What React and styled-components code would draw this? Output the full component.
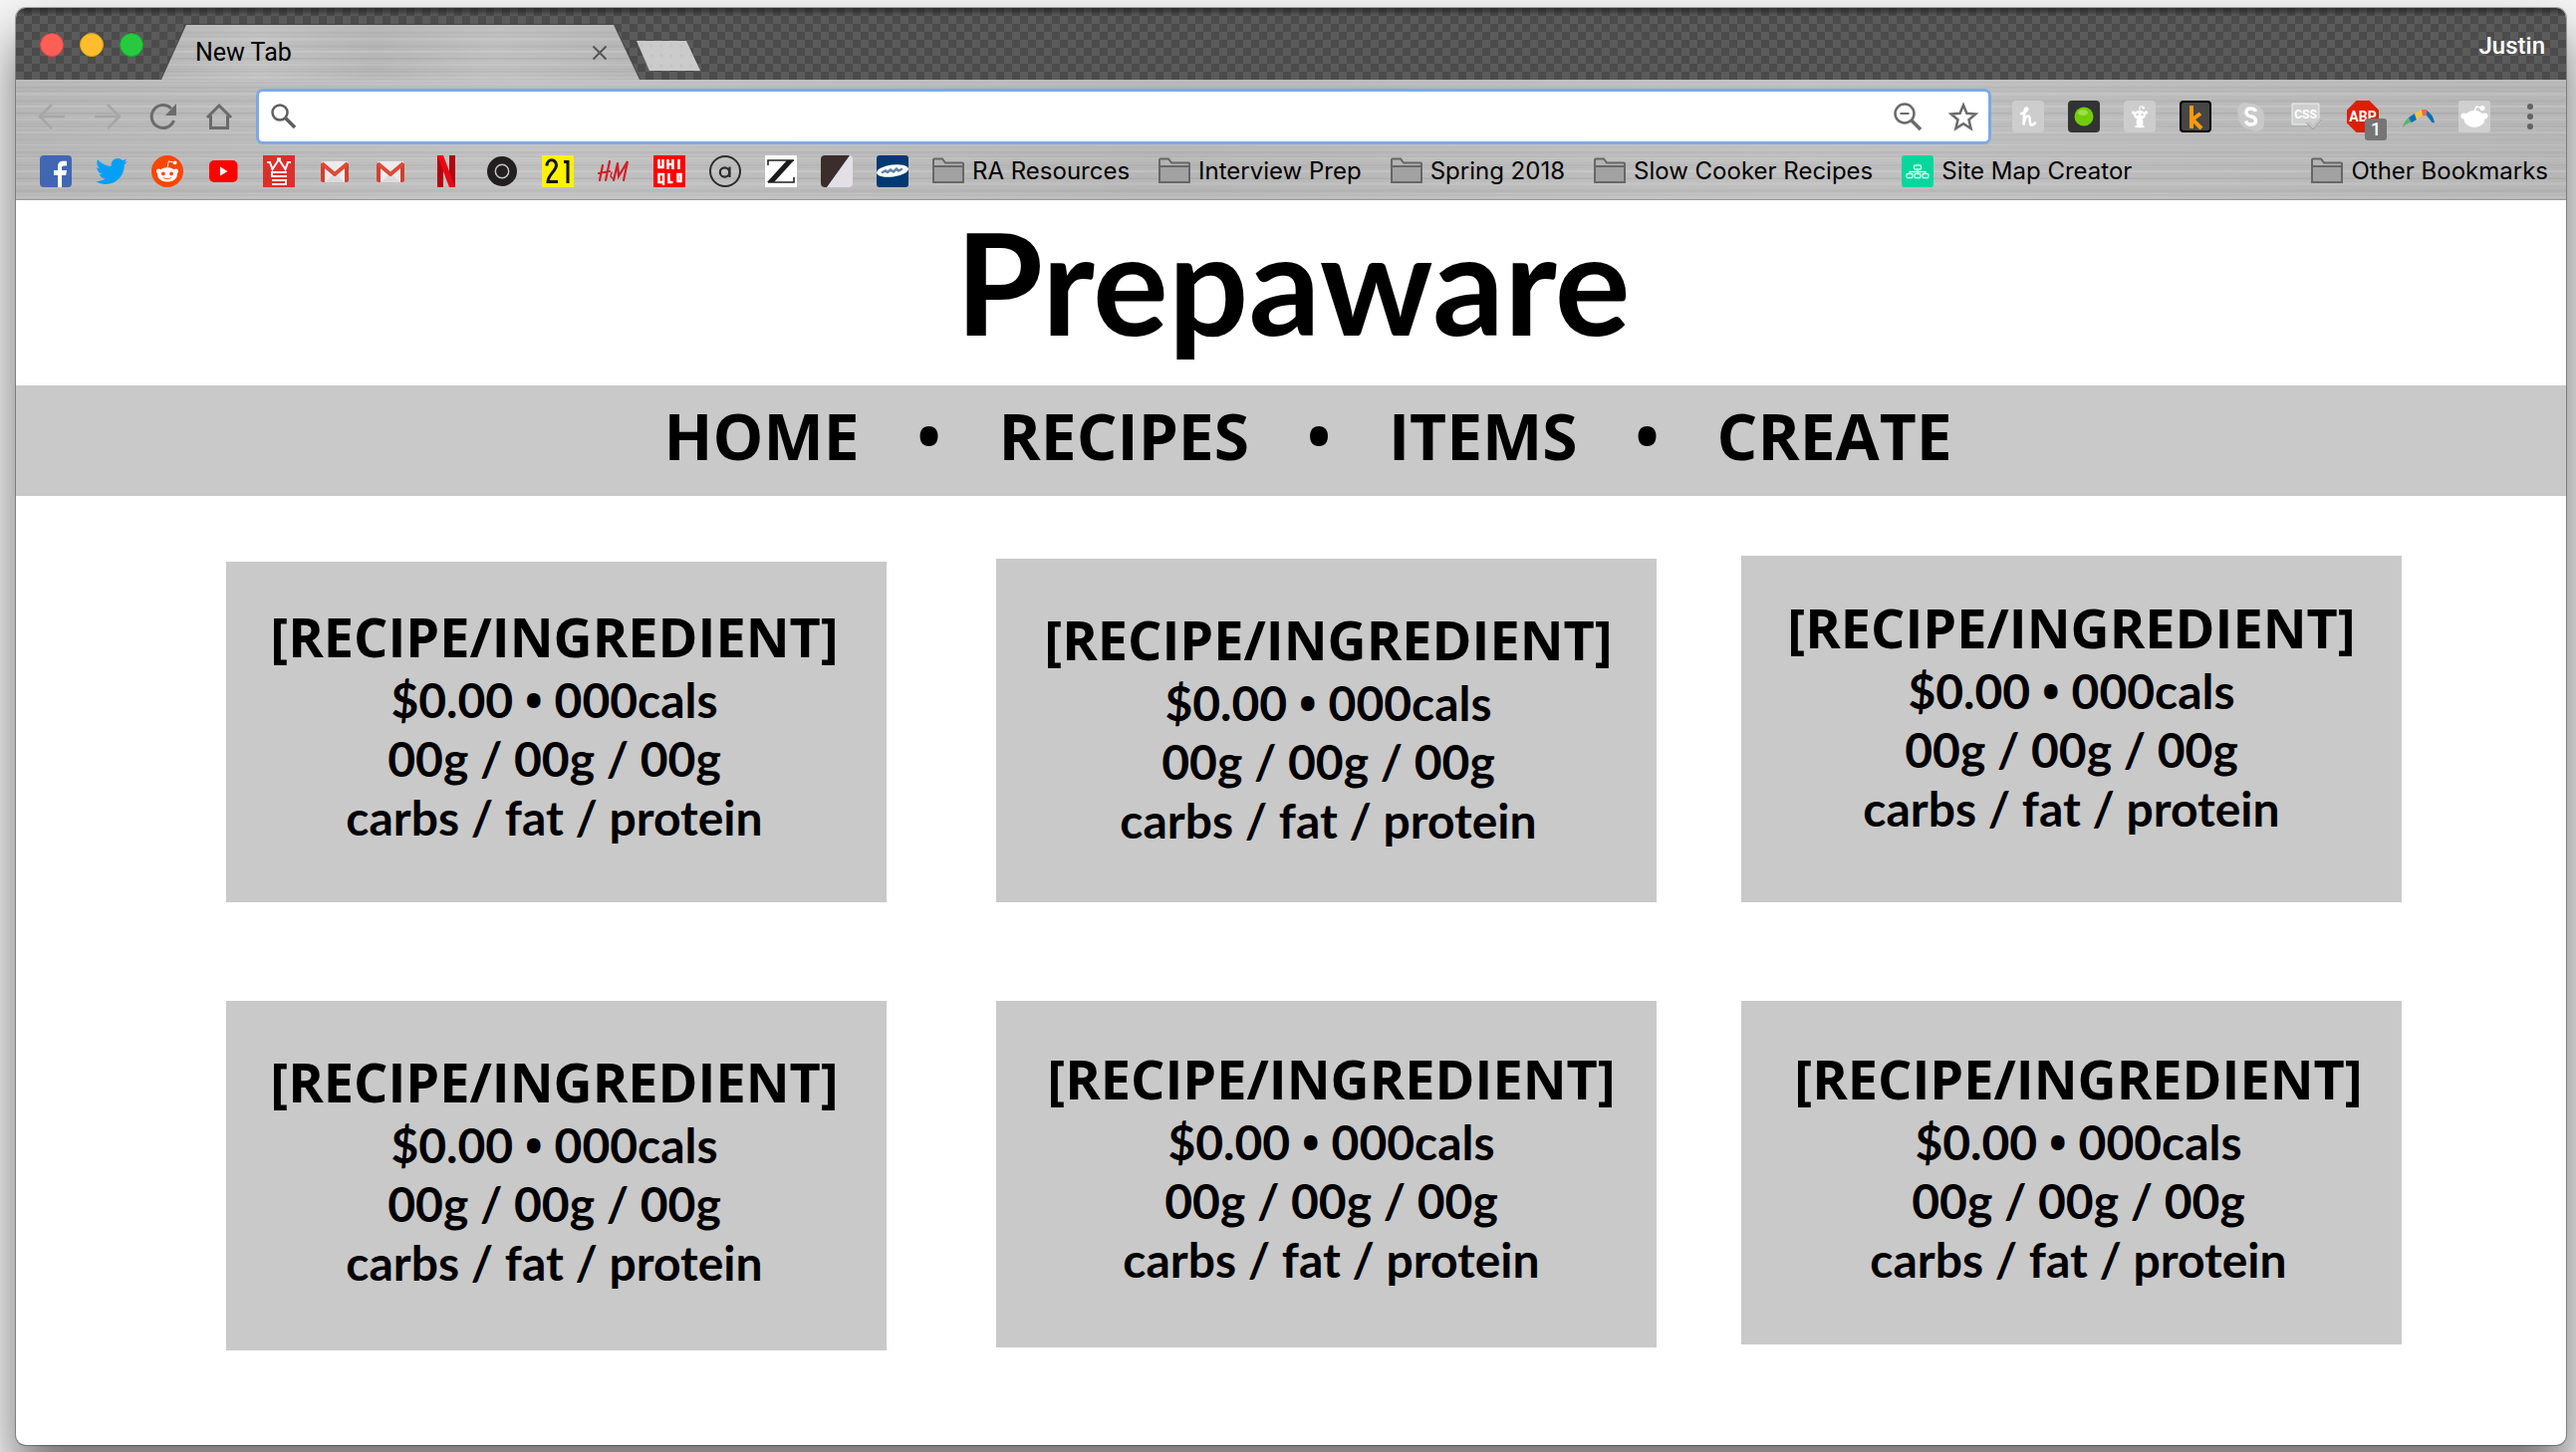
import React from "react";
import styled, { createGlobalStyle, css } from "styled-components";
import { FaTwitter, FaRedditAlien } from "react-icons/fa";

const uiFont = 'Inter, Roboto, "Liberation Sans", sans-serif';
const headingFont = '"Open Sans", "Noto Sans", sans-serif';
const pageFont = 'Lato, "Open Sans", sans-serif';

const metal = css`
  background-color: #bcbcbc;
  background-image:
    repeating-linear-gradient(180deg, rgba(255, 255, 255, 0.1) 0 2px, transparent 2px 7px, rgba(0, 0, 0, 0.03) 7px 9px, transparent 9px 13px),
    repeating-linear-gradient(180deg, rgba(0, 0, 0, 0.03) 0 1px, transparent 1px 4px, rgba(255, 255, 255, 0.08) 4px 5px, transparent 5px 11px),
    linear-gradient(90deg, rgba(0, 0, 0, 0.03), rgba(255, 255, 255, 0.08) 20%, rgba(0, 0, 0, 0.03) 45%, rgba(255, 255, 255, 0.06) 70%, rgba(0, 0, 0, 0.03));
`;

const GlobalStyle = createGlobalStyle`
  *, *::before, *::after { box-sizing: border-box; }
  body { margin: 0; background: #f4f4f4; color: #000; }
  button { border: 0; padding: 0; background: none; font: inherit; color: inherit; cursor: pointer; }
  a { color: inherit; text-decoration: none; }
`;

const Desktop = styled.div`
  min-height: 100vh;
  padding: 8px 10px 7px 16px;
  display: flex;
  overflow: hidden;
`;

const Window = styled.div`
  flex: 1;
  display: flex;
  flex-direction: column;
  overflow: hidden;
  border-radius: 10px;
  background: #fff;
  box-shadow: 0 0 0 1px rgba(0, 0, 0, 0.3), 0 30px 50px rgba(0, 0, 0, 0.55);
`;

const TitleBar = styled.div`
  height: 72px;
  display: flex;
  align-items: flex-end;
  padding: 0 21px 0 24px;
  font-family: ${uiFont};
  background:
    linear-gradient(180deg, rgba(0, 0, 0, 0.45), transparent 8px),
    repeating-conic-gradient(#4b4b4b 0 25%, #5b5b5b 0 50%) 0 0 / 16px 16px;
`;

const Lights = styled.div`
  display: flex;
  gap: 16px;
  align-self: center;
  margin: 2px 17px 0 0;
`;

const Light = styled.button`
  width: 24px;
  height: 24px;
  border-radius: 50%;
  background: ${(p) => p.$fill};
  border: 1px solid ${(p) => p.$edge};
`;

const TabEdge = styled.div`
  width: 482px;
  height: 56px;
  padding: 1px 1px 0;
  background: #4a4a4a;
  clip-path: polygon(25px 0, 456px 0, 100% 100%, 0 100%);
`;

const Tab = styled.div`
  ${metal}
  height: 55px;
  padding: 0 32px 0 34px;
  display: flex;
  align-items: center;
  justify-content: space-between;
  font-family: Roboto, sans-serif;
  font-size: 25px;
  line-height: 28px;
  clip-path: polygon(25px 0, 454px 0, 100% 100%, 0 100%);
`;

const TabClose = styled.button`
  width: 16px;
  height: 16px;
  display: flex;
`;

const NewTab = styled.button`
  width: 64px;
  height: 30px;
  margin: 0 0 9px -4px;
  background: radial-gradient(#c3c3c3 1px, transparent 2px) 0 0 / 10px 10px, #cbcbcb;
  clip-path: polygon(0 0, 50px 0, 100% 100%, 13px 100%);
`;

const Profile = styled.button`
  margin-left: auto;
  align-self: center;
  padding-top: 4px;
  font: 500 24px/28px Roboto, sans-serif;
  color: #fff;
`;

const Chrome = styled.div`
  ${metal}
  border-bottom: 1px solid #9a9a9a;
  font-family: ${uiFont};
`;

const Toolbar = styled.div`
  display: flex;
  align-items: center;
  gap: 21px;
  padding: 9px 20px 0;
`;

const IconGroup = styled.div`
  display: flex;
  align-items: center;
  gap: 24px;
`;

const IconButton = styled.button`
  position: relative;
  width: 32px;
  height: 32px;
  display: grid;
  place-items: center;
  color: ${(p) => (p.$muted ? "#a6a6a6" : "#6b6b6b")};
  svg { display: block; }
`;

const Badge = styled.span`
  position: absolute;
  left: 18px;
  top: 18px;
  width: 22px;
  height: 22px;
  border-radius: 3px;
  background: #757575;
  color: #fff;
  font: 500 18px/22px Roboto, sans-serif;
  text-align: center;
`;

const Omnibox = styled.form`
  flex: 1;
  min-width: 0;
  height: 56px;
  display: flex;
  align-items: center;
  gap: 24px;
  padding: 0 9px;
  background: #fff;
  border: 3px solid #7babe2;
  border-radius: 7px;
  color: #5f5f5f;
`;

const Address = styled.input`
  flex: 1;
  min-width: 0;
  border: 0;
  outline: 0;
  padding: 0;
  background: transparent;
  font: 400 24px/32px ${uiFont};
`;

const Bookmarks = styled.nav`
  display: flex;
  align-items: center;
  gap: 24px;
  padding: 11px 18px 12px 24px;
`;

const FolderGroup = styled.div`
  flex: 1;
  display: flex;
  gap: 29px;
`;

const Bookmark = styled.a`
  display: flex;
  align-items: center;
  gap: 8px;
  font-size: 24px;
  line-height: 32px;
  white-space: nowrap;
  svg { display: block; flex: none; }
  &:last-child { margin-left: ${(p) => (p.$end ? "auto" : "0")}; }
`;

const Page = styled.main`
  flex: 1;
  font-family: ${pageFont};
  font-weight: 700;
`;

const Brand = styled.h1`
  margin: 0;
  padding: 0 0 24px 4px;
  font-size: 142px;
  line-height: 162px;
  text-align: center;
`;

const SiteNav = styled.nav`
  display: flex;
  justify-content: center;
  align-items: center;
  gap: 58px;
  padding: 0 0 9px 34px;
  background: #c9c9c9;
  font-family: ${headingFont};
  font-size: 64px;
  line-height: 102px;
`;

const Dot = styled.span`
  width: 24px;
  display: flex;
  justify-content: center;
`;

const CardGrid = styled.div`
  display: grid;
  grid-template-columns: 773fr 748fr 663fr;
  row-gap: 99px;
  padding: 60px 165px 60px 211px;
`;

const Card = styled.article`
  width: 663px;
  height: ${(p) => p.$height}px;
  align-self: ${(p) => p.$align};
  padding: ${(p) => p.$top}px 4px 0 ${(p) => p.$left}px;
  background: #c9c9c9;
  text-align: center;
  white-space: nowrap;
`;

const CardTitle = styled.h2`
  margin: 0;
  font-family: ${headingFont};
  font-size: 54px;
  line-height: 68px;
`;

const CardLine = styled.p`
  margin: 0;
  font-size: 48px;
  line-height: 59px;
`;

const Bullet = styled.span`
  font-family: ${headingFont};
  line-height: 1;
`;

const Svg = ({ children, size = 32, ...rest }) => (
  <svg width={size} height={size} viewBox="0 0 32 32" fill="none" aria-hidden="true" {...rest}>
    {children}
  </svg>
);

const Folder = () => (
  <Svg>
    <path d="M1 27V4.500q0-1 1-1h8l3 4h17q1 0 1 1V27z" fill="#b4b4b4" />
    <path d="M1 11h30v16H1z" fill="#a2a2a2" />
    <path d="M1 27V4.500q0-1 1-1h8l3 4h17q1 0 1 1V27zM1 11h30" stroke="#666" strokeWidth="2" />
  </Svg>
);

const Gmail = () => (
  <Svg>
    <path d="M3 6h26v21H3z" fill="#ececec" />
    <path d="M6 27l10-9 10 9z" fill="#dcdcdc" />
    <path d="M2 8v17q0 2 2 2h2V11zM30 8v17q0 2-2 2h-2V11z" fill="#d2402f" />
    <path d="M3 8l13 11L29 8" stroke="#dd4b39" strokeWidth="4" strokeLinejoin="round" />
  </Svg>
);

const favicons = [
  ["Facebook", <Svg><rect width="32" height="32" rx="4" fill="#4267b2" /><path d="M18 32V20h-4v-5h4v-3.600c0-3.700 2-5.600 5.400-5.600H27v4.600h-2.400c-2 0-2.600.8-2.600 2.400V15h5l-.8 5H22v12z" fill="#fff" /></Svg>],
  ["Twitter", <FaTwitter size={32} color="#059ff5" />],
  ["Reddit", <Svg><circle cx="16" cy="16" r="16" fill="#ff4500" /><FaRedditAlien x="4" y="4" size={24} color="#fff" /></Svg>],
  ["YouTube", <Svg><rect x="2" y="5" width="28.500" height="22" rx="5" fill="#f00" /><path d="M13 11.500l7.500 4.500-7.500 4.500z" fill="#fff" /></Svg>],
  ["Crown", <Svg><rect width="32" height="32" fill="#d9302c" /><path d="M4 7h4M24 7h4M14 3.500h4" stroke="#fff" strokeWidth="2" /><path d="M7 7l2.500 7L16 4l6.500 10L25 7" stroke="#fff" strokeWidth="2" /><path d="M24 17H9v4h15M24 25H9M9 29h14v-4" stroke="#fff" strokeWidth="2" /></Svg>],
  ["Gmail", <Gmail />],
  ["Gmail 2", <Gmail />],
  ["Netflix", <Svg><path d="M7 0h6v32H7zM19 0h6v32h-6z" fill="#b1060f" /><path d="M7 0h6l12 32h-6z" fill="#e50914" /></Svg>],
  ["Record", <Svg><circle cx="16" cy="16" r="15" fill="#231f20" /><circle cx="16" cy="16" r="6.700" stroke="#c4c4c4" strokeWidth="1.500" /></Svg>],
  ["Forever 21", <Svg><rect width="32" height="32" fill="#fff200" /><path d="M5 10.500C5 3 14.500 3 14.500 10 14.500 15 6 20 6 26.500h10M22 6.500h4V28" stroke="#111" strokeWidth="3" /></Svg>],
  ["H&M", <Svg><g stroke="#d2202c" strokeWidth="2.200" strokeLinecap="round"><path d="M5 10L2 25M12 6L8 25M1 18l11-2M20 8l-4 17M20 8l1 13 9-15-4 19" /><path d="M14 17l-1 4 3 3" strokeWidth="1.500" /></g></Svg>],
  ["Uniqlo", <Svg><rect width="32" height="32" fill="#f00" /><path d="M5.500 4v8h4V4M14.500 4v10M19.500 4v10M14.500 9h5M25.500 4v10M10 30V19H5.500v8H10M15.500 18v9h4M24.500 19h3v7h-3z" stroke="#fff" strokeWidth="2.500" /></Svg>],
  ["Circle A", <Svg><circle cx="16" cy="16" r="15" stroke="#2b2b2b" strokeWidth="2" /><circle cx="15.500" cy="17" r="4.700" stroke="#2b2b2b" strokeWidth="2.200" /><path d="M20.500 11.500V22" stroke="#2b2b2b" strokeWidth="2.200" /></Svg>],
  ["Z", <Svg><rect width="32" height="32" fill="#fff" /><path d="M3 10V5h26M3 27h26v-5" stroke="#222" strokeWidth="1.600" /><path d="M22 5h7L9 27H2z" fill="#1c1c1c" /></Svg>],
  ["Split", <Svg><rect width="32" height="32" rx="4" fill="#e4dfe6" /><path d="M4 0h25L6 32H4q-4 0-4-4V4q0-4 4-4z" fill="#3a2d2c" /></Svg>],
  ["Ellipse", <Svg><rect width="32" height="32" rx="3" fill="#003a70" /><ellipse cx="16" cy="15.500" rx="16" ry="6" transform="rotate(-8 16 15.500)" fill="#fff" /><path d="M5 17.500l4-2 2 1.500 3-2.500 3 2 3-3 2 2 4-2" stroke="#5d80a5" strokeWidth="2.400" /></Svg>],
];

const SiteMap = () => (
  <Svg>
    <rect width="32" height="32" rx="3" fill="#07d79c" />
    <g stroke="#d4fff0" strokeWidth="1.300">
      <rect x="12.500" y="10" width="7" height="4" rx="1" />
      <rect x="5" y="18.500" width="6" height="4" rx="1" />
      <rect x="13" y="18.500" width="6" height="4" rx="1" />
      <rect x="21" y="18.500" width="6" height="4" rx="1" />
      <path d="M16 14v4.500M8 18.500v-2h16v2" />
    </g>
  </Svg>
);

const folders = ["RA Resources", "Interview Prep", "Spring 2018", "Slow Cooker Recipes"];

const extensions = [
  ["Honey", <Svg><rect width="32" height="32" rx="4" fill="#cdcdcd" /><path d="M9 13c4 0 8-5 5.500-5.500S12 15 11.500 24.500c1-7 3-9.500 5-9s.5 7 2 8.500 3 0 4.500-1.500" stroke="#fff" strokeWidth="2.600" strokeLinecap="round" /></Svg>],
  ["Green dot", <Svg><rect width="32" height="32" rx="4" fill="#333" /><circle cx="16" cy="16" r="9.500" fill="#72cc0a" /><ellipse cx="15" cy="12" rx="5" ry="3" fill="#9be04a" /></Svg>],
  ["Reddit suite", <Svg><rect width="32" height="32" rx="4" fill="#cdcdcd" /><g fill="#fff"><ellipse cx="16" cy="14.500" rx="6" ry="4.500" /><circle cx="9.500" cy="12" r="1.700" /><circle cx="22.500" cy="12" r="1.700" /><ellipse cx="16" cy="22" rx="3.500" ry="5" /><ellipse cx="16" cy="26" rx="5" ry="1.300" /><circle cx="19.500" cy="7" r="1.500" /></g><path d="M16 10V6h3" stroke="#fff" /><circle cx="13.500" cy="14" r="1.200" fill="#cdcdcd" /><circle cx="18.500" cy="14" r="1.200" fill="#cdcdcd" /></Svg>],
  ["Keepa", <Svg><rect x="1" y="1" width="30" height="30" rx="3" fill="#464646" stroke="#000" strokeWidth="2" /><path d="M12 5v23M21 13l-8 6 9 9" stroke="#ff9a0a" strokeWidth="4" /></Svg>],
  ["Skype", <Svg><circle cx="16" cy="16" r="13" fill="#c9c9c9" /><circle cx="10" cy="10" r="8" fill="#c9c9c9" /><circle cx="21" cy="23" r="8" fill="#c9c9c9" /><path d="M20.500 11q-1-3-5-3-4.500 0-4.500 3.700 0 3.300 4.800 4.300 4.700 1 4.700 4.300 0 3.700-5 3.700-4 0-5-3.500" stroke="#fff" strokeWidth="3.400" /></Svg>],
  ["CSS", <Svg><path d="M1 3h27v21H1z" fill="#d0d0d0" stroke="#eee" /><text x="14.500" y="18" textAnchor="middle" fontFamily="Roboto" fontWeight="700" fontSize="12" fill="#fff">CSS</text><path d="M17 22l5 5 8-8" stroke="#c4c4c4" strokeWidth="4" /><path d="M15 22l7 7 9-10" stroke="#9b9b9b" /></Svg>],
  ["Adblock", <><Svg><path d="M9.500 0h13L32 9.500v13L22.500 32h-13L0 22.500v-13z" fill="#dc1f04" /><text x="16" y="21" textAnchor="middle" fontFamily="Roboto" fontWeight="700" fontSize="14" fill="#fff">ABP</text></Svg><Badge>1</Badge></>],
  ["Boomerang", <Svg><path d="M0 27q1-6 6-10l4 4q-6 2-10 6z" fill="#5ab56b" /><path d="M6 17l6-4 2 6-5 3z" fill="#0a6fb5" /><path d="M12 13l7-4 1 6-6 4z" fill="#f5c544" /><path d="M19 9h5l1 6h-5z" fill="#ea6a53" /><path d="M24 10q6 3 8 12-3 1-4-2l-4-5z" fill="#0a6fb5" /></Svg>],
  ["Reddit checker", <Svg><rect width="32" height="32" rx="2" fill="#cfcfcf" /><g fill="#fff"><ellipse cx="16" cy="18.500" rx="10.500" ry="8.500" /><circle cx="5.500" cy="15.500" r="3" /><circle cx="26.500" cy="15.500" r="3" /><circle cx="24" cy="7.500" r="2.500" /></g><path d="M16 11l2-5 5 1" stroke="#fff" strokeWidth="1.500" /></Svg>],
];

const MenuDots = () => (
  <Svg><g fill="#636363"><circle cx="16" cy="6" r="3" /><circle cx="16" cy="16" r="3" /><circle cx="16" cy="26" r="3" /></g></Svg>
);

const pages = ["HOME", "RECIPES", "ITEMS", "CREATE"];

const cards = [
  { height: 342, align: "end", top: 41, left: 0 },
  { height: 345, align: "end", top: 47, left: 8 },
  { height: 348, align: "end", top: 38, left: 4 },
  { height: 351, align: "start", top: 47, left: 0 },
  { height: 348, align: "start", top: 44, left: 14 },
  { height: 345, align: "start", top: 44, left: 18 },
];

export default function App() {
  return (
    <Desktop>
      <GlobalStyle />
      <Window>
        <TitleBar>
          <Lights>
            <Light aria-label="Close window" $fill="#ff5f57" $edge="#e2463f" />
            <Light aria-label="Minimize" $fill="#ffbd2e" $edge="#e1a116" />
            <Light aria-label="Zoom" $fill="#28c940" $edge="#12ac28" />
          </Lights>
          <TabEdge>
            <Tab>
              <span>New Tab</span>
              <TabClose aria-label="Close tab">
                <Svg size={16}><path d="M3 3l26 26M29 3L3 29" stroke="#555" strokeWidth="4" /></Svg>
              </TabClose>
            </Tab>
          </TabEdge>
          <NewTab aria-label="Open new tab" />
          <Profile>Justin</Profile>
        </TitleBar>

        <Chrome>
          <Toolbar>
            <IconGroup>
              <IconButton $muted aria-label="Back">
                <Svg><path d="M29 16H5M16 4L4 16l12 12" stroke="currentColor" strokeWidth="2.500" /></Svg>
              </IconButton>
              <IconButton $muted aria-label="Forward">
                <Svg><path d="M3 16h24M16 4l12 12-12 12" stroke="currentColor" strokeWidth="2.500" /></Svg>
              </IconButton>
              <IconButton aria-label="Reload">
                <Svg><path d="M26.500 20A11.500 11.500 0 1 1 24 8" stroke="currentColor" strokeWidth="3" /><path d="M29 3v12H18z" fill="currentColor" /></Svg>
              </IconButton>
              <IconButton aria-label="Home">
                <Svg><path d="M4 17L16 5l12 12M7.500 15v12.500h17V15" stroke="currentColor" strokeWidth="3" /></Svg>
              </IconButton>
            </IconGroup>

            <Omnibox onSubmit={(e) => e.preventDefault()}>
              <Svg><circle cx="12" cy="12" r="7.500" stroke="currentColor" strokeWidth="2.500" /><path d="M17.500 17.500L27 27" stroke="currentColor" strokeWidth="3.500" /></Svg>
              <Address aria-label="Address and search bar" />
              <IconButton type="button" aria-label="Zoom out">
                <Svg><circle cx="13" cy="13" r="9.500" stroke="currentColor" strokeWidth="2.500" /><path d="M20 20l9 9" stroke="currentColor" strokeWidth="3.500" /><path d="M8.500 13h9" stroke="currentColor" strokeWidth="2" /></Svg>
              </IconButton>
              <IconButton type="button" aria-label="Bookmark this page">
                <Svg><path d="M16 4.500l3.400 8.300 8.900.7-6.800 5.800 2.100 8.700-7.600-4.700L8.400 28l2.100-8.700-6.800-5.800 8.900-.7z" stroke="currentColor" strokeWidth="2.500" /></Svg>
              </IconButton>
            </Omnibox>

            <IconGroup>
              {extensions.map(([name, icon]) => (
                <IconButton key={name} aria-label={name}>{icon}</IconButton>
              ))}
              <IconButton aria-label="Menu"><MenuDots /></IconButton>
            </IconGroup>
          </Toolbar>

          <Bookmarks aria-label="Bookmarks">
            {favicons.map(([name, icon]) => (
              <Bookmark key={name} href="#" aria-label={name}>{icon}</Bookmark>
            ))}
            <FolderGroup>
              {folders.map((name) => (
                <Bookmark key={name} href="#"><Folder />{name}</Bookmark>
              ))}
              <Bookmark href="#"><SiteMap />Site Map Creator</Bookmark>
              <Bookmark href="#" $end><Folder />Other Bookmarks</Bookmark>
            </FolderGroup>
          </Bookmarks>
        </Chrome>

        <Page>
          <Brand>Prepaware</Brand>
          <SiteNav>
            {pages.map((name, i) => (
              <React.Fragment key={name}>
                {i > 0 && <Dot>•</Dot>}
                <a href="#">{name}</a>
              </React.Fragment>
            ))}
          </SiteNav>
          <CardGrid>
            {cards.map((c, i) => (
              <Card key={i} $height={c.height} $align={c.align} $top={c.top} $left={c.left}>
                <CardTitle>[RECIPE/INGREDIENT]</CardTitle>
                <CardLine>$0.00 <Bullet>•</Bullet> 000cals</CardLine>
                <CardLine>00g / 00g / 00g</CardLine>
                <CardLine>carbs / fat / protein</CardLine>
              </Card>
            ))}
          </CardGrid>
        </Page>
      </Window>
    </Desktop>
  );
}
